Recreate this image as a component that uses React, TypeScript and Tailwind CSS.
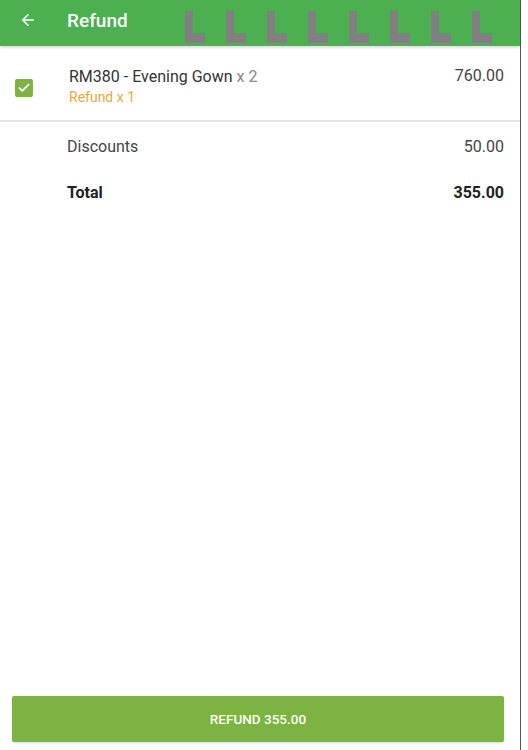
import { ArrowLeft, Check } from 'lucide-react';

// ---------------- Placeholder glyph (missing-icon "L") ----------------
const LGlyph = () => (
    <svg width="20" height="32" viewBox="0 0 20 32" className="shrink-0">
        <path d="M0 0h8v22h12v10H0z" fill="#808080" />
    </svg>
);

// ---------------- Component ----------------
export default function App() {
    return (
        <div
            className="w-[521px] h-[750px] bg-white border-r border-[#555] flex flex-col"
            style={{ fontFamily: 'Roboto, "Noto Sans", sans-serif' }}
        >
            {/* Header */}
            <div className="h-[46px] bg-[#4caf50] flex items-start shrink-0 shadow-[0_2px_2px_rgba(0,0,0,0.12)]">
                <ArrowLeft className="w-[18px] h-[18px] text-white ml-[19px] mt-[11px]" strokeWidth={2.2} />
                <span className="ml-[30px] text-white text-[19px] leading-[24px] font-medium w-[118px] mt-[9px]">Refund</span>
                <div className="flex gap-[21px] mt-[11px]">
                    {Array.from({ length: 8 }).map((_, i) => (
                        <LGlyph key={i} />
                    ))}
                </div>
            </div>

            {/* Item */}
            <div className="flex items-center h-[74px] mt-[2px] border-b-2 border-[#e6e6e6] pr-[16px]">
                <div className="w-[18px] h-[18px] rounded-[2px] bg-[#7cb342] flex items-center justify-center ml-[15px] mt-[8px]">
                    <Check className="w-[14px] h-[14px] text-white" strokeWidth={3} />
                </div>
                <div className="ml-[36px] flex-1 flex flex-col mt-[4px]">
                    <div className="text-[16px] text-[#333] leading-[22px]">
                        RM380 - Evening Gown <span className="text-[#888]">x 2</span>
                    </div>
                    <div className="text-[14px] text-[#f0a830] leading-[18px]">Refund x 1</div>
                </div>
                <div className="text-[16px] text-[#444] self-start mt-[16px]">760.00</div>
            </div>

            {/* Summary */}
            <div className="pl-[67px] pr-[16px] pt-[13px] flex flex-col">
                <div className="flex justify-between text-[16px] text-[#444] h-[24px] items-center">
                    <span>Discounts</span>
                    <span>50.00</span>
                </div>
                <div className="flex justify-between text-[16px] font-bold text-[#222] h-[24px] items-center mt-[22px]">
                    <span>Total</span>
                    <span>355.00</span>
                </div>
            </div>

            <div className="flex-1" />

            {/* Action */}
            <div className="px-[12px] pb-[8px] pr-[16px]">
                <button className="w-full h-[46px] rounded-[2px] bg-[#7cb342] text-white text-[13.5px] font-medium shadow-[0_1px_2px_rgba(0,0,0,0.15)]">
                    REFUND 355.00
                </button>
            </div>
        </div>
    );
}
